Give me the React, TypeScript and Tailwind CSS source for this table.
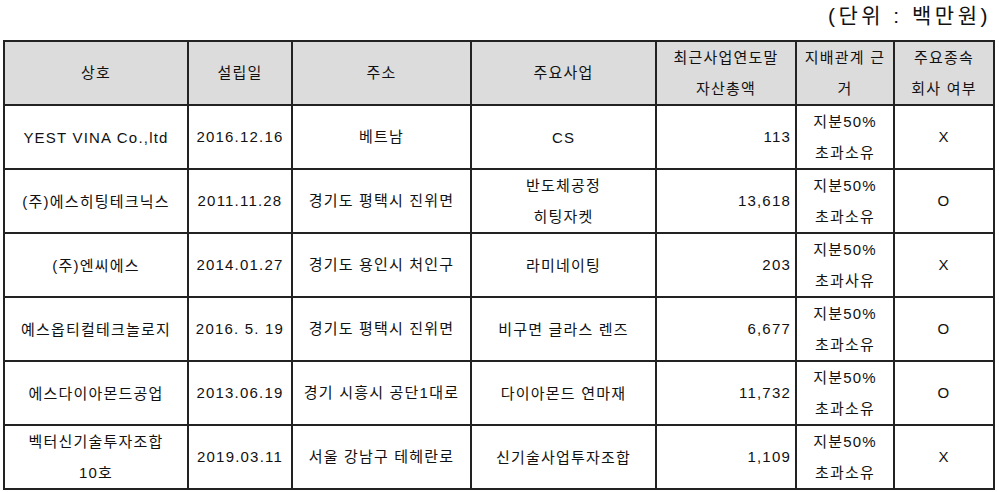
const rows = [
  { name: ['YEST VINA Co.,ltd'], date: '2016.12.16', addr: '베트남', biz: ['CS'], asset: '113', ctrl: ['지분50%', '초과소유'], major: 'X' },
  { name: ['(주)에스히팅테크닉스'], date: '2011.11.28', addr: '경기도 평택시 진위면', biz: ['반도체공정', '히팅자켓'], asset: '13,618', ctrl: ['지분50%', '초과소유'], major: 'O' },
  { name: ['(주)엔씨에스'], date: '2014.01.27', addr: '경기도 용인시 처인구', biz: ['라미네이팅'], asset: '203', ctrl: ['지분50%', '초과사유'], major: 'X' },
  { name: ['예스옵티컬테크놀로지'], date: '2016. 5. 19', addr: '경기도 평택시 진위면', biz: ['비구면 글라스 렌즈'], asset: '6,677', ctrl: ['지분50%', '초과소유'], major: 'O' },
  { name: ['에스다이아몬드공업'], date: '2013.06.19', addr: '경기 시흥시 공단1대로', biz: ['다이아몬드 연마재'], asset: '11,732', ctrl: ['지분50%', '초과소유'], major: 'O' },
  { name: ['벡터신기술투자조합', '10호'], date: '2019.03.11', addr: '서울 강남구 테헤란로', biz: ['신기술사업투자조합'], asset: '1,109', ctrl: ['지분50%', '초과소유'], major: 'X' },
];

const Lines = ({ items }: { items: string[] }) => (
  <>
    {items.map((t, i) => (
      <div key={i} className="leading-[31px]">{t}</div>
    ))}
  </>
);

const cell = 'border-2 border-[#222] p-0';

export default function App() {
  return (
    <div className="w-[999px] h-[492px] bg-white text-[#111] text-[15px] tracking-[1.2px] font-['Liberation_Sans','Noto_Sans_CJK_KR',sans-serif]">
      <div className="h-[40px] pr-[8px] pt-[3px] text-right text-[21px] tracking-[3.5px] leading-[26px]">(단위 : 백만원)</div>
      <table className="ml-[3px] border-collapse border-2 border-[#6b6b6b] table-fixed w-[990px]">
        <colgroup>
          <col className="w-[184px]" />
          <col className="w-[104px]" />
          <col className="w-[179px]" />
          <col className="w-[185px]" />
          <col className="w-[140px]" />
          <col className="w-[98px]" />
          <col className="w-[100px]" />
        </colgroup>
        <thead>
          <tr className="h-[63px] bg-[#dcdcdc]">
            <th className={`${cell} font-normal`}>상호</th>
            <th className={`${cell} font-normal`}>설립일</th>
            <th className={`${cell} font-normal`}>주소</th>
            <th className={`${cell} font-normal`}>주요사업</th>
            <th className={`${cell} font-normal`}><Lines items={['최근사업연도말', '자산총액']} /></th>
            <th className={`${cell} font-normal`}><Lines items={['지배관계 근', '거']} /></th>
            <th className={`${cell} font-normal`}><Lines items={['주요종속', '회사 여부']} /></th>
          </tr>
        </thead>
        <tbody>
          {rows.map((r, i) => (
            <tr key={i} className="h-[64px]">
              <td className={`${cell} text-center`}><Lines items={r.name} /></td>
              <td className={`${cell} text-center`}>{r.date}</td>
              <td className={`${cell} text-center`}>{r.addr}</td>
              <td className={`${cell} text-center`}><Lines items={r.biz} /></td>
              <td className={`${cell} text-right pr-[4px]`}>{r.asset}</td>
              <td className={`${cell} text-center`}><Lines items={r.ctrl} /></td>
              <td className={`${cell} text-center`}>{r.major}</td>
            </tr>
          ))}
        </tbody>
      </table>
    </div>
  );
}
